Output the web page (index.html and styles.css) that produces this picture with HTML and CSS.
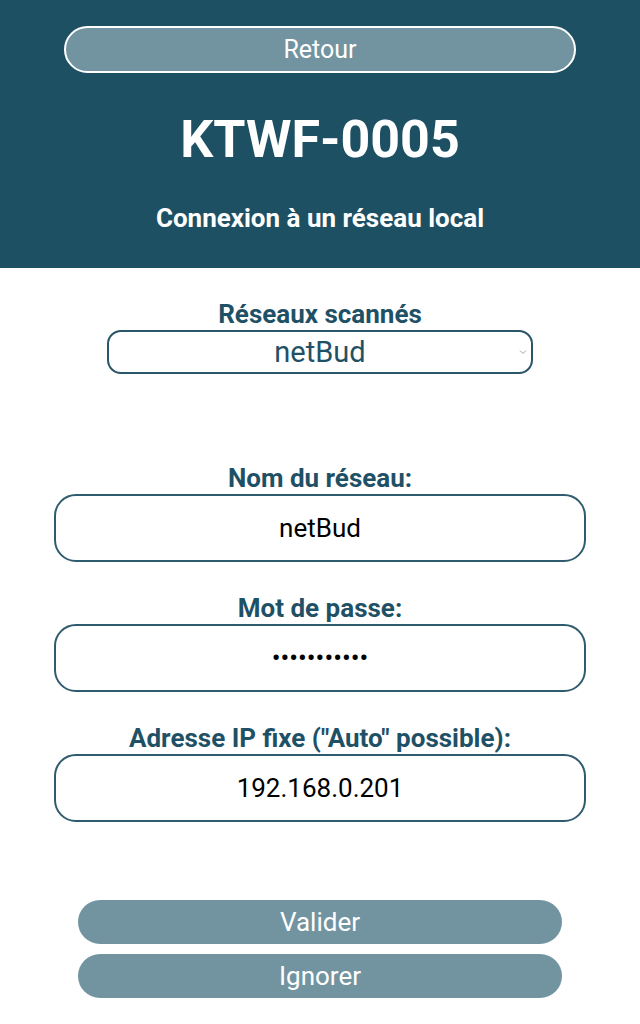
FILE: index.html
```html
<!DOCTYPE html>
<html lang="fr">
<head>
  <meta charset="UTF-8">
  <meta name="viewport" content="width=device-width, initial-scale=1.0">
  <title>KTWF-0005</title>
  <link rel="stylesheet" href="styles.css">
</head>
<body>

<!-- En-tête -->
<header class="top">
  <button class="btn btn-back" type="button">Retour</button>
  <h1>KTWF-0005</h1>
  <h2>Connexion à un réseau local</h2>
</header>

<!-- Formulaire wifi -->
<main class="content">
  <div class="scan">
    <label for="networks">Réseaux scannés</label>
    <div class="select-wrap">
      <select id="networks">
        <option>netBud</option>
      </select>
      <svg class="chevron" width="8" height="6" viewBox="0 0 8 6"><path d="M1 1.5 L4 4.5 L7 1.5" fill="none" stroke="#9aa8ae" stroke-width="1"/></svg>
    </div>
  </div>

  <div class="field">
    <label for="ssid">Nom du réseau:</label>
    <input type="text" id="ssid" value="netBud">
  </div>

  <div class="field">
    <label for="pass">Mot de passe:</label>
    <input type="password" id="pass" value="monmotdepas">
  </div>

  <div class="field">
    <label for="ip">Adresse IP fixe ("Auto" possible):</label>
    <input type="text" id="ip" value="192.168.0.201">
  </div>

  <div class="actions">
    <button class="btn" type="button">Valider</button>
    <button class="btn" type="button">Ignorer</button>
  </div>
</main>

</body>
</html>
```

FILE: styles.css
```css
/* Général */
body {
  font-family: Roboto, "Noto Sans", sans-serif;
  margin: 0;
  padding: 0;
  background-color: #ffffff;
  color: #1f5166;
}

.btn {
  display: block;
  width: 100%;
  height: 44px;
  border: none;
  border-radius: 22px;
  background-color: #7294a0;
  color: #ffffff;
  font-family: inherit;
  font-size: 26px;
  padding: 0;
  cursor: pointer;
}

/* En-tête */
.top {
  background-color: #1e5064;
  height: 268px;
  box-sizing: border-box;
  padding: 26px 64px 0;
  text-align: center;
  color: #ffffff;
}

.btn-back {
  height: 47px;
  border: 2px solid #ffffff;
  border-radius: 24px;
  font-size: 25px;
}

.top h1 {
  margin: 36px 0 0;
  font-size: 52px;
  line-height: 62px;
  font-weight: 700;
}

.top h2 {
  margin: 31px 0 0;
  font-size: 26px;
  line-height: 32px;
  font-weight: 700;
}

/* Contenu */
.content {
  padding: 30px 54px 0;
  text-align: center;
}

label {
  display: block;
  font-size: 26px;
  font-weight: 700;
  line-height: 32px;
  color: #1f5166;
}

.scan {
  width: 426px;
  margin: 0 auto;
}

.select-wrap {
  position: relative;
}

select {
  display: block;
  width: 100%;
  height: 44px;
  padding: 0;
  border: 2px solid #2a5669;
  border-radius: 14px;
  background-color: #ffffff;
  color: #1f5166;
  font-family: inherit;
  font-size: 29px;
  text-align: center;
  text-align-last: center;
  appearance: none;
  -webkit-appearance: none;
}

.chevron {
  position: absolute;
  right: 6px;
  top: 19px;
}

.field {
  margin-top: 30px;
}

.scan + .field {
  margin-top: 88px;
}

.field input {
  display: block;
  width: 100%;
  box-sizing: border-box;
  height: 68px;
  margin-top: 0;
  border: 2px solid #2f5b6e;
  border-radius: 22px;
  text-align: center;
  font-family: inherit;
  font-size: 26px;
  color: #000000;
  background-color: #ffffff;
}

.actions {
  width: 484px;
  margin: 78px auto 0;
  display: flex;
  flex-direction: column;
  gap: 10px;
}
```
